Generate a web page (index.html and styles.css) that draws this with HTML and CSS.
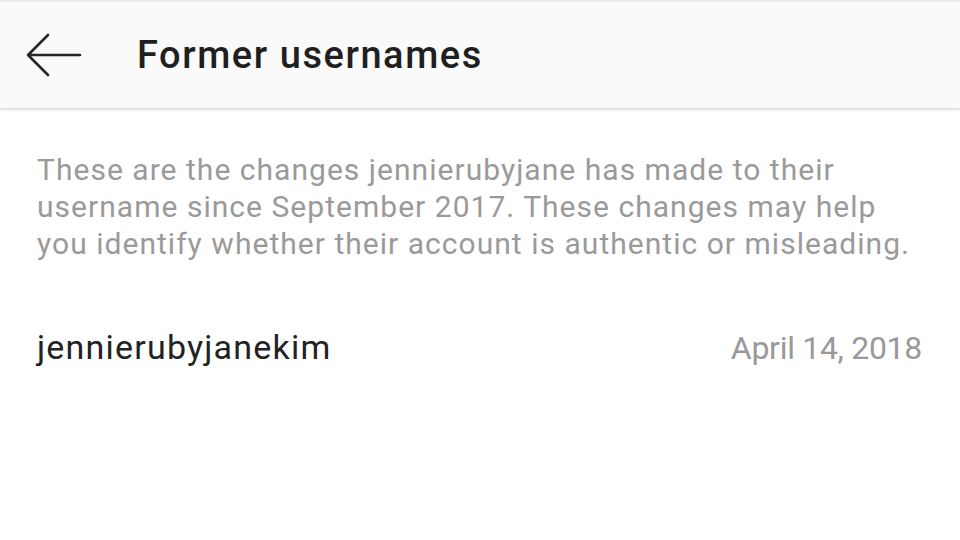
FILE: index.html
```html
<!DOCTYPE html>
<html>
<head>
<meta charset="utf-8">
<link rel="stylesheet" href="styles.css">
</head>
<body>
<div class="app">
  <header class="topbar">
    <button class="back" aria-label="Back">
      <svg width="56" height="44" viewBox="0 0 56 44">
        <path d="M2 22 H54 M22 2 L2 22 L22 42" fill="none" stroke="#262626" stroke-width="2.6" stroke-linecap="round" stroke-linejoin="round"/>
      </svg>
    </button>
    <h1 class="title">Former usernames</h1>
  </header>
  <main class="content">
    <p class="desc">These are the changes jennierubyjane has made to their username since September 2017. These changes may help you identify whether their account is authentic or misleading.</p>
    <div class="row">
      <span class="name">jennierubyjanekim</span>
      <span class="date">April 14, 2018</span>
    </div>
  </main>
</div>
</body>
</html>
```

FILE: styles.css
```css
* { box-sizing: border-box; }
html, body { margin: 0; padding: 0; }
body {
  width: 960px;
  height: 540px;
  background: #ffffff;
  font-family: Roboto, "Noto Sans", sans-serif;
  overflow: hidden;
}
.app { display: flex; flex-direction: column; }
.topbar {
  height: 109px;
  background: #fafafa;
  border-top: 2px solid #ececec;
  border-bottom: 1px solid #dcdcdc;
  box-shadow: 0 1px 3px rgba(0,0,0,0.12);
  display: flex;
  align-items: center;
  padding-left: 26px;
}
.back {
  border: 0;
  background: none;
  padding: 0;
  display: flex;
  width: 56px;
  height: 44px;
  margin-right: 55px;
}
.title {
  margin: 0;
  font-size: 38px;
  font-weight: 500;
  color: #1f1f1f;
  letter-spacing: 1.55px;
}
.content {
  padding: 42px 30px 0 37px;
}
.desc {
  margin: 0;
  font-size: 30px;
  line-height: 37px;
  color: #9a9a9a;
  letter-spacing: 1.03px;
}
.row {
  display: flex;
  justify-content: space-between;
  align-items: baseline;
  margin-top: 65px;
}
.name {
  font-size: 34px;
  color: #222222;
  letter-spacing: 1.2px;
}
.date {
  font-size: 32px;
  color: #999999;
  letter-spacing: -0.3px;
  margin-right: 8px;
}
```
